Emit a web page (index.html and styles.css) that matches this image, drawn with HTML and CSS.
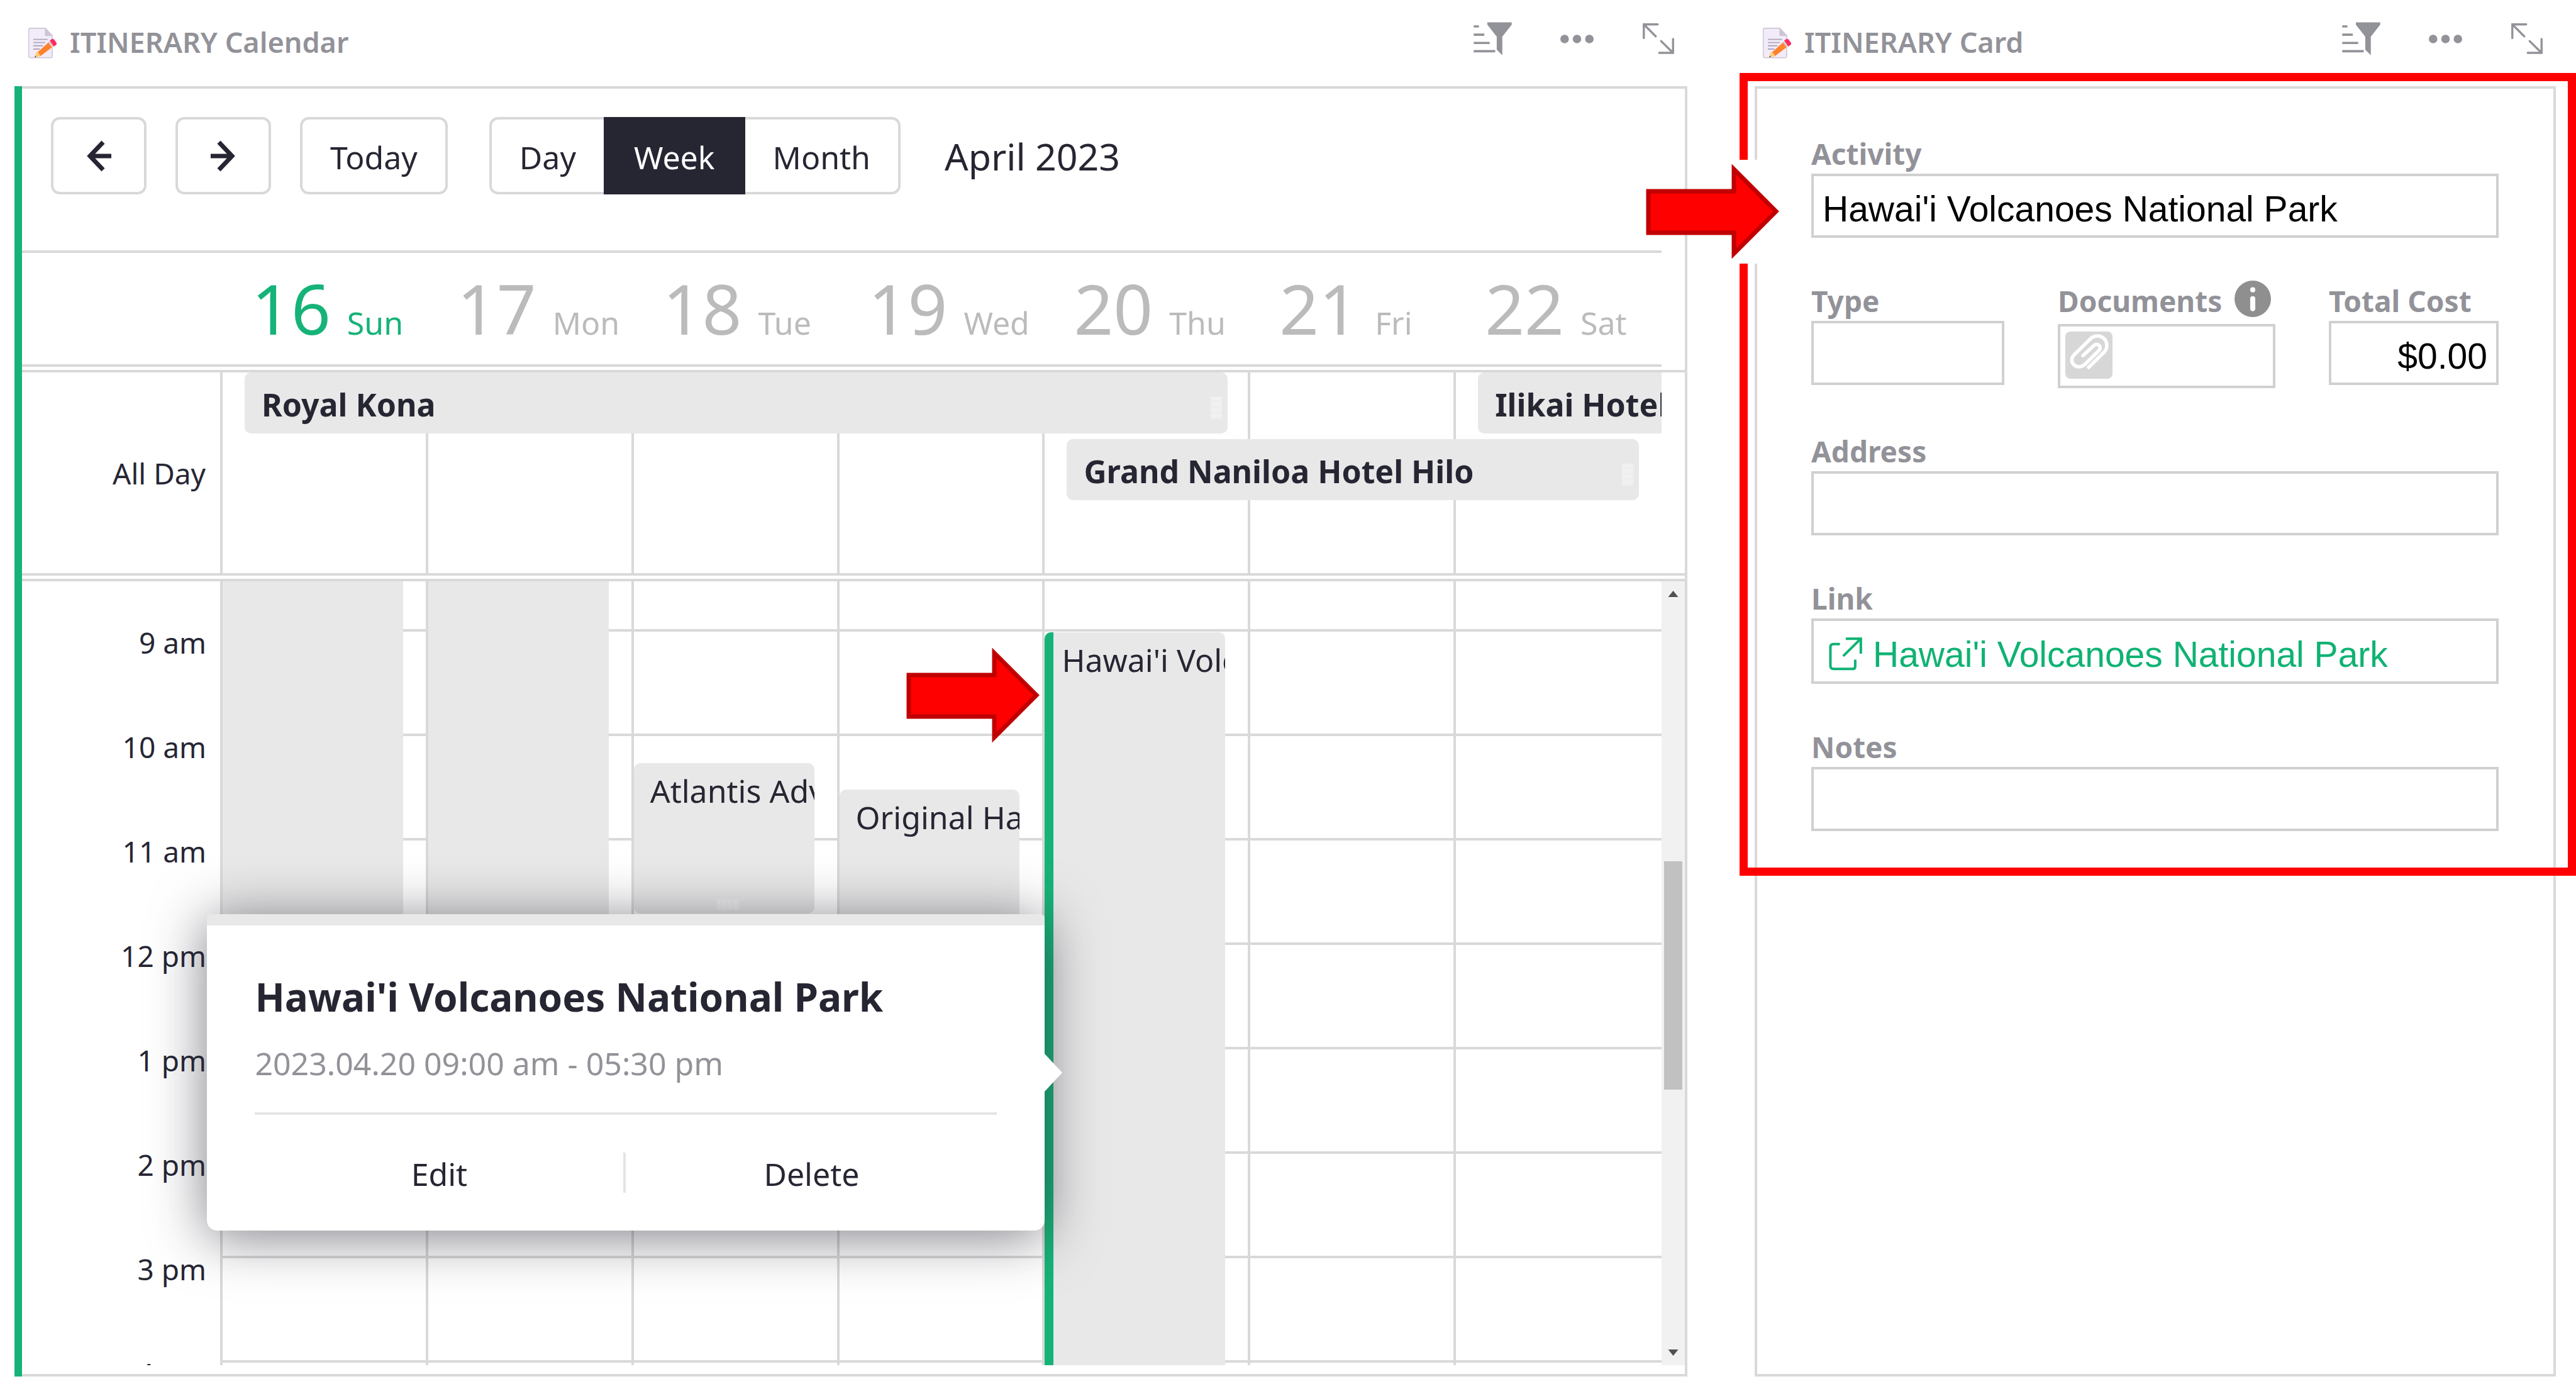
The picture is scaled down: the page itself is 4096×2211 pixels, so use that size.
FILE: index.html
```html
<!DOCTYPE html>
<html lang="en">
<head>
<meta charset="utf-8">
<title>Itinerary</title>
<link rel="stylesheet" href="styles.css">
</head>
<body>
<svg class="sprite" aria-hidden="true">
  <symbol id="icon-memo" viewBox="0 0 150 158">
    <path d="M12 2h76l36 38v104q0 11-11 11H12Q2 155 2 145V12Q2 2 12 2z" fill="#f1ecf7" stroke="#cdc4d6" stroke-width="5"/>
    <path d="M86 2v34q0 6 6 6h32z" fill="#cdc4d6"/>
    <path d="M26 60h74M26 76h62M26 93h50M26 110h34" stroke="#b0a5bd" stroke-width="6"/>
    <path d="M48 126L106 74l18 26-60 46z" fill="#ff822d"/>
    <path d="M48 124l16 24-30 4 6-24z" fill="#ffce7c"/>
    <path d="M36 143l6 8-8 1z" fill="#44362e"/>
    <path d="M104 74l9-7 19 27-9 7z" fill="#d7d1dc"/>
    <path d="M111 66l10-7q8-5 14 3l10 14q5 8-2 13l-11 8z" fill="#fc2b62"/>
  </symbol>
  <symbol id="icon-filter" viewBox="0 0 200 172">
    <path d="M1 16h27v12H1zM1 59h55v12H1zM1 102h83v12H1zM1 145h112v12H1zM72 1h127v12l-49 62v97l-29-29V75L72 13z" fill="#929299"/>
  </symbol>
  <symbol id="icon-dots" viewBox="0 0 172 44">
    <g fill="#929299"><circle cx="22" cy="22" r="22"/><circle cx="86" cy="22" r="22"/><circle cx="150" cy="22" r="22"/></g>
  </symbol>
  <symbol id="icon-expand" viewBox="0 0 168 170">
    <path d="M8 80V9h72M8 9l62 62M160 85v72H88M160 157L98 96" fill="none" stroke="#929299" stroke-width="11" stroke-linecap="round"/>
  </symbol>
  <symbol id="icon-arrow" viewBox="0 0 40 50">
    <path d="M27 3L6 25l21 22M6 25h34" fill="none" stroke="#262633" stroke-width="7"/>
  </symbol>
  <symbol id="pointer" viewBox="0 0 212 164">
    <path d="M4 50H140V15L207 82L140 149V116H4z" fill="#ff0000" stroke="#c00000" stroke-width="7"/>
  </symbol>
</svg>

<main class="app">
  <section class="pane">
    <header class="pane-head pane-head-calendar">
      <svg class="emoji"><use href="#icon-memo"/></svg>
      <h2 class="pane-title">ITINERARY Calendar</h2>
      <div class="pane-actions">
        <button class="icon-button" aria-label="Sort and filter"><svg class="i-filter"><use href="#icon-filter"/></svg></button>
        <button class="icon-button" aria-label="More"><svg class="i-dots"><use href="#icon-dots"/></svg></button>
        <button class="icon-button" aria-label="Expand"><svg class="i-expand"><use href="#icon-expand"/></svg></button>
      </div>
    </header>
    <div class="pane-body calendar">
      <div class="toolbar">
        <button class="tool" aria-label="Previous week"><svg class="i-arrow"><use href="#icon-arrow"/></svg></button>
        <button class="tool" aria-label="Next week"><svg class="i-arrow flip"><use href="#icon-arrow"/></svg></button>
        <button class="tool">Today</button>
        <div class="views">
          <button class="view">Day</button>
          <button class="view selected">Week</button>
          <button class="view">Month</button>
        </div>
        <h3 class="range">April 2023</h3>
      </div>

      <div class="week-head">
        <div class="day-name today"><span class="date">16</span><span>Sun</span></div>
        <div class="day-name"><span class="date">17</span><span>Mon</span></div>
        <div class="day-name"><span class="date">18</span><span>Tue</span></div>
        <div class="day-name"><span class="date">19</span><span>Wed</span></div>
        <div class="day-name"><span class="date">20</span><span>Thu</span></div>
        <div class="day-name"><span class="date">21</span><span>Fri</span></div>
        <div class="day-name"><span class="date">22</span><span>Sat</span></div>
      </div>

      <div class="all-day">
        <div class="all-day-label">All Day</div>
        <div class="all-day-grid">
          <div class="cell c1"></div><div class="cell c2"></div><div class="cell c3"></div><div class="cell c4"></div>
          <div class="cell c5"></div><div class="cell c6"></div><div class="cell c7"></div>
          <div class="stay royal">Royal Kona</div>
          <div class="stay grand">Grand Naniloa Hotel Hilo</div>
          <div class="stay ilikai">Ilikai Hotel</div>
        </div>
      </div>

      <div class="time-grid">
        <div class="hours">
          <span>9 am</span><span>10 am</span><span>11 am</span><span>12 pm</span>
          <span>1 pm</span><span>2 pm</span><span>3 pm</span><span>4 pm</span>
        </div>
        <div class="days">
          <div class="day"><div class="event morning"></div></div>
          <div class="day"><div class="event morning"></div></div>
          <div class="day"><div class="event atlantis">Atlantis Adventures</div></div>
          <div class="day"><div class="event original">Original Hawaiian</div></div>
          <div class="day">
            <div class="event volcano">Hawai'i Volcanoes</div>
            <svg class="pointer pointer-event"><use href="#pointer"/></svg>
            <div class="popup" role="dialog" aria-label="Event details">
              <h3 class="popup-title">Hawai'i Volcanoes National Park</h3>
              <p class="popup-time">2023.04.20 09:00 am - 05:30 pm</p>
              <div class="popup-buttons">
                <button class="popup-button">Edit</button>
                <button class="popup-button">Delete</button>
              </div>
              <svg class="popup-tip" viewBox="0 0 32 68"><path d="M0 0L4 4L32 34L4 64L0 68z" fill="#fff"/></svg>
            </div>
          </div>
          <div class="day"></div>
          <div class="day"></div>
        </div>
        <div class="scrollbar" aria-hidden="true">
          <svg class="scroll-arrow" viewBox="0 0 37 42"><path d="M18.500 15l8 10h-16z" fill="#505050"/></svg>
          <div class="scroll-space-top"></div>
          <div class="scroll-thumb"></div>
          <div class="scroll-space-bottom"></div>
          <svg class="scroll-arrow" viewBox="0 0 37 42"><path d="M18.500 27l8-10h-16z" fill="#505050"/></svg>
        </div>
      </div>
    </div>
  </section>

  <section class="pane">
    <header class="pane-head">
      <svg class="emoji"><use href="#icon-memo"/></svg>
      <h2 class="pane-title">ITINERARY Card</h2>
      <div class="pane-actions">
        <button class="icon-button" aria-label="Sort and filter"><svg class="i-filter"><use href="#icon-filter"/></svg></button>
        <button class="icon-button" aria-label="More"><svg class="i-dots"><use href="#icon-dots"/></svg></button>
        <button class="icon-button" aria-label="Expand"><svg class="i-expand"><use href="#icon-expand"/></svg></button>
      </div>
    </header>
    <div class="pane-body">
      <form class="card">
        <div class="field">
          <label for="activity">Activity</label>
          <input id="activity" type="text" value="Hawai'i Volcanoes National Park">
        </div>
        <div class="field-row">
          <div class="field">
            <label for="type">Type</label>
            <input id="type" type="text">
          </div>
          <div class="field">
            <div class="label-line">
              <span class="label" id="documents">Documents</span>
              <svg class="i-info" viewBox="0 0 186 186"><circle cx="93" cy="93" r="93" fill="#8f8f8f"/><circle cx="93" cy="47" r="13" fill="#fff"/><path d="M93 92v51" stroke="#fff" stroke-width="26" stroke-linecap="round"/></svg>
            </div>
            <div class="box attachments" role="group" aria-labelledby="documents">
              <button class="clip" type="button" aria-label="Add attachment">
                <svg viewBox="0 0 243 243"><path d="M91 124L147 72C157 63 168 65 174 71C181 79 181 89 172 99L102 168C87 183 63 187 45 172C30 158 29 137 45 120L127 40C148 17 181 18 200 37C219 56 218 88 199 107L120 185" fill="none" stroke="#fff" stroke-width="18" stroke-linecap="round"/></svg>
              </button>
            </div>
          </div>
          <div class="field">
            <label for="cost">Total Cost</label>
            <input id="cost" class="number" type="text" value="$0.00">
          </div>
        </div>
        <div class="field">
          <label for="address">Address</label>
          <input id="address" type="text">
        </div>
        <div class="field">
          <span class="label" id="link">Link</span>
          <div class="box link-box" role="group" aria-labelledby="link">
            <a class="link" href="#park">
              <svg class="i-link" viewBox="0 0 172 172"><path d="M57 35H24Q8 35 8 51V147Q8 163 24 163H124Q136 163 136 149V115M87 7H165V84M165 7L74 97" fill="none" stroke="#0fb273" stroke-width="13"/></svg>
              Hawai'i Volcanoes National Park</a>
          </div>
        </div>
        <div class="field">
          <label for="notes">Notes</label>
          <input id="notes" type="text">
        </div>
        <div class="highlight"></div>
        <div class="highlight-gap"></div>
        <svg class="pointer pointer-card"><use href="#pointer"/></svg>
      </form>
    </div>
  </section>
</main>
</body>
</html>
```
FILE: styles.css
```css
:root {
  --line: #d9d9d9;
  --ink: #262633;
  --muted: #929299;
  --green: #16b378;
  --event: #e8e8e8;
}

* { box-sizing: border-box; }

body {
  margin: 0;
  background: #fff;
  color: var(--ink);
  font: 50px/64px "Noto Sans", "Open Sans", sans-serif;
}

h2, h3, p { margin: 0; font-weight: 400; }

button {
  margin: 0;
  padding: 0;
  border: 0;
  background: none;
  color: inherit;
  font: inherit;
}

svg { display: block; }

.sprite { position: absolute; width: 0; height: 0; }

.app {
  display: grid;
  grid-template-columns: 2660fr 1274fr;
  column-gap: 107px;
  height: 100vh;
  padding: 0 32px 23px 23px;
  overflow: hidden;
}

.pane { display: flex; flex-direction: column; min-width: 0; min-height: 0; }

.pane-head {
  display: flex;
  align-items: flex-start;
  flex: none;
  height: 137px;
  padding: 35px 20px 0 13px;
}
.pane-head-calendar { padding-left: 22px; }

.emoji { width: 46px; height: 49px; margin: 9px 20px 0 0; }

.pane-title { font-size: 45px; font-weight: 600; color: var(--muted); }

.pane-actions {
  display: flex;
  align-items: center;
  gap: 77px;
  height: 53px;
  margin-left: auto;
}
.i-filter { width: 61px; height: 53px; }
.i-dots { width: 53px; height: 14px; }
.i-expand { width: 52px; height: 52px; }

.pane-body {
  flex: 1;
  min-height: 0;
  border: 4px solid var(--line);
}

/* Calendar */
.calendar {
  display: flex;
  flex-direction: column;
  margin-left: 12px;
  padding-bottom: 14px;
  border-left: 0;
  box-shadow: -12px 0 0 var(--green);
}

.toolbar {
  display: flex;
  align-items: flex-start;
  flex: none;
  height: 257px;
  padding: 45px 0 0 46px;
}

.tool, .view {
  height: 123px;
  padding: 4px 44px 0;
  border: 4px solid var(--line);
}
.tool {
  min-width: 152px;
  margin-right: 46px;
  border-radius: 14px;
}
.i-arrow { width: 40px; height: 50px; margin: -4px auto 0; }
.flip { transform: scaleX(-1); }

.views { display: flex; margin: 0 70px 0 20px; }
.view:first-child { border-right: 0; border-radius: 14px 0 0 14px; }
.view:last-child { border-left: 0; border-radius: 0 14px 14px 0; }
.view.selected { border-color: var(--ink); background: var(--ink); color: #fff; }

.range { font-size: 59px; line-height: 125px; }

.week-head {
  display: grid;
  grid-template-columns: repeat(7, 1fr);
  flex: none;
  height: 185px;
  margin-right: 37px;
  padding: 12px 4px 0 315px;
  border-top: 4px solid var(--line);
  border-bottom: 4px solid var(--line);
}
.day-name {
  display: flex;
  align-items: baseline;
  gap: 26px;
  padding-left: 50px;
  color: #bbb;
}
.day-name.today { color: var(--green); }
.date { font-size: 110px; line-height: 150px; }

.all-day {
  display: flex;
  flex: none;
  height: 327px;
  margin-top: 5px;
  border-top: 4px solid var(--line);
  border-bottom: 4px solid var(--line);
}
.all-day-label {
  flex: none;
  align-self: center;
  width: 315px;
  padding-right: 23px;
  text-align: right;
  font-size: 46px;
}
.all-day-grid {
  display: grid;
  grid-template-columns: repeat(7, 1fr);
  grid-template-rows: 97px 97px 1fr;
  row-gap: 9px;
  flex: 1;
  min-width: 0;
  margin-right: 37px;
  padding-right: 4px;
}
.cell { grid-row: 1 / -1; border-left: 4px solid var(--line); }
.c1 { grid-column: 1; }
.c2 { grid-column: 2; }
.c3 { grid-column: 3; }
.c4 { grid-column: 4; }
.c5 { grid-column: 5; }
.c6 { grid-column: 6; }
.c7 { grid-column: 7; }

.stay {
  position: relative;
  min-width: 0;
  margin: 0 32px 0 39px;
  padding-left: 27px;
  overflow: hidden;
  border-radius: 10px;
  background: var(--event);
  font-weight: 700;
  line-height: 103px;
  white-space: nowrap;
}
.stay::after {
  content: "";
  position: absolute;
  top: 39px;
  right: 9px;
  width: 18px;
  height: 35px;
  background: repeating-linear-gradient(#f1f1f1 0 5px, #eeeeee 5px 9px);
}
.royal { grid-area: 1 / 1 / 2 / 6; }
.grand { grid-area: 2 / 5 / 3 / 8; }
.ilikai { grid-area: 1 / 7 / 2 / 8; margin-right: -4px; border-radius: 10px 0 0 10px; }
.ilikai::after { display: none; }

.time-grid {
  display: flex;
  flex: 1;
  min-height: 0;
  margin-top: 5px;
  border-top: 4px solid var(--line);
  overflow: hidden;
}
.hours {
  display: flex;
  flex-direction: column;
  flex: none;
  width: 315px;
  padding: 65px 22px 0 0;
  text-align: right;
  font-size: 46px;
}
.hours span { flex: none; height: 166px; }

.days {
  display: grid;
  grid-template-columns: repeat(7, 1fr);
  flex: 1;
  min-width: 0;
  padding-right: 4px;
  background: linear-gradient(var(--line) 4px, transparent 4px) 0 76px / 100% 166px;
}
.day { position: relative; border-left: 4px solid var(--line); }

.event {
  position: absolute;
  left: 0;
  right: 36px;
  padding: 12px 0 0 26px;
  overflow: hidden;
  border-radius: 10px;
  background: var(--event);
  white-space: nowrap;
}
.morning { top: 0; height: 900px; border-radius: 0 0 10px 10px; }
.atlantis { top: 289px; height: 239px; }
.atlantis::after {
  content: "";
  position: absolute;
  bottom: 6px;
  left: 132px;
  width: 36px;
  height: 16px;
  background: repeating-linear-gradient(90deg, #f1f1f1 0 5px, #eeeeee 5px 9px);
}
.original { top: 331px; height: 332px; }
.volcano {
  top: 81px;
  bottom: 0;
  padding-left: 13px;
  border-left: 14px solid var(--green);
  border-radius: 10px 10px 0 0;
}

.popup {
  position: absolute;
  z-index: 2;
  top: 529px;
  right: 100%;
  width: 1332px;
  padding: 71px 76px 60px;
  border-top: 18px solid #e8e8e8;
  border-radius: 6px 6px 16px 16px;
  background: #fff;
  box-shadow: 0 9px 87px rgba(38, 38, 51, .6);
}
.popup-title { font-size: 62px; font-weight: 700; line-height: 84px; white-space: nowrap; }
.popup-time { margin-top: 30px; color: var(--muted); line-height: 68px; }
.popup-buttons {
  display: grid;
  grid-template-columns: 1fr 1fr;
  margin-top: 44px;
  padding-top: 60px;
  border-top: 4px solid #e5e5e5;
}
.popup-button { height: 64px; line-height: 68px; }
.popup-button:first-child { border-right: 4px solid #e5e5e5; }
.popup-tip { position: absolute; left: 100%; top: 200px; width: 32px; height: 68px; margin-left: -4px; }

.scrollbar {
  display: flex;
  flex-direction: column;
  flex: none;
  width: 37px;
  background: #f1f1f1;
}
.scroll-arrow { width: 37px; height: 42px; }
.scroll-space-top { flex: 403; }
.scroll-thumb { flex: 364; margin: 0 4px; background: #c1c1c1; }
.scroll-space-bottom { flex: 396; }

/* Card */
.card {
  position: relative;
  display: flex;
  flex-direction: column;
  gap: 68px;
  padding: 71px 87px 71px 86px;
}
.field { display: flex; flex-direction: column; min-width: 0; }
.field-row {
  display: grid;
  grid-template-columns: 307fr 346fr 270fr;
  align-items: start;
  column-gap: 85px;
}
label, .label { color: var(--muted); font-size: 46px; font-weight: 700; }
.label-line { display: flex; align-items: flex-start; gap: 20px; height: 69px; }
.i-info { width: 58px; height: 58px; }

input, .box {
  width: 100%;
  height: 102px;
  border: 4px solid #d0d0d0;
  border-radius: 0;
  background: #fff;
}
input {
  padding: 10px 14px 0;
  color: #000;
  font: 57px/70px "Liberation Sans", Arial, sans-serif;
}
.number { text-align: right; }
.attachments { padding: 8px; }
.clip { display: block; width: 75px; height: 75px; border-radius: 8px; background: #d7d7d7; }
.link-box { height: 104px; }
.link {
  display: flex;
  align-items: center;
  gap: 17px;
  height: 100%;
  padding: 9px 0 0 24px;
  color: #0fb273;
  font: 57px/70px "Liberation Sans", Arial, sans-serif;
  text-decoration: none;
  white-space: nowrap;
}
.i-link { width: 53px; height: 53px; }

/* Annotations over the card and the calendar */
.highlight {
  position: absolute;
  inset: -25px -36px 0 -28px;
  border: 13px solid #ff0000;
  pointer-events: none;
}
.highlight-gap {
  position: absolute;
  top: 113px;
  left: -32px;
  width: 32px;
  height: 165px;
  background: #fff;
}
.pointer { position: absolute; width: 212px; height: 164px; }
.pointer-card { top: 113px; left: -177px; }
.pointer-event { top: 99px; right: 100%; margin-right: 8px; }
```
